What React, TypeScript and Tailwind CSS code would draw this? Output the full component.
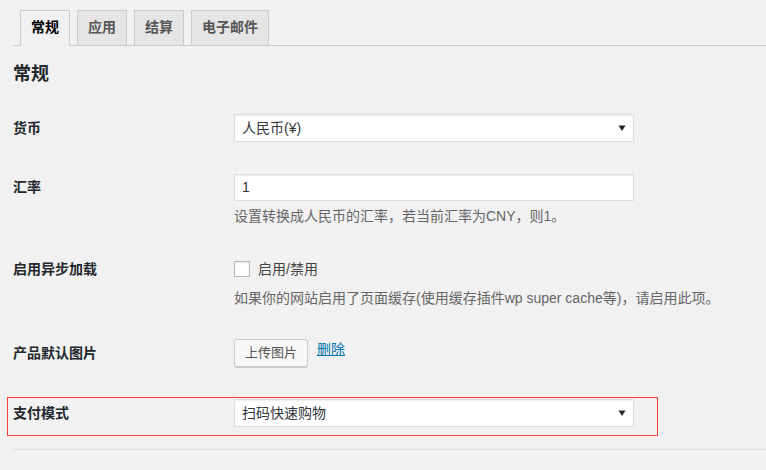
const font = { fontFamily: '"Liberation Sans", "Noto Sans CJK SC", sans-serif' };

function Caret() {
  return (
    <svg width="8" height="8" viewBox="0 0 8 8" className="shrink-0">
      <path d="M0.5 1.5 H7.5 L4 7 Z" fill="#23282d" />
    </svg>
  );
}

function Select({ value }: { value: string }) {
  return (
    <div className="w-[400px] h-[28px] bg-white border border-[#dddddd] shadow-[inset_0_1px_2px_rgba(0,0,0,0.07)] flex items-center justify-between pl-[7px] pr-[7px] text-[14px] text-[#32373c]">
      <span className="leading-[20px]">{value}</span>
      <Caret />
    </div>
  );
}

const tabs = ["常规", "应用", "结算", "电子邮件"];

export default function App() {
  return (
    <div className="w-[766px] h-[470px] bg-[#f1f1f1] overflow-hidden pl-[13px]" style={font}>
      {/* tabs */}
      <div className="flex items-end pt-[10px] border-b border-[#cccccc] h-[46px]">
        {tabs.map((t, i) => (
          <div
            key={t}
            className={`ml-[7px] px-[10px] h-[36px] -mb-px border border-[#cccccc] text-[14px] font-bold leading-[33px] ${
              i === 0 ? "bg-[#f1f1f1] border-b-[#f1f1f1] text-black" : "bg-[#e5e5e5] text-[#555555]"
            }`}
          >
            {t}
          </div>
        ))}
      </div>

      <h2 className="mt-[16px] text-[18px] font-bold leading-[24px] text-[#23282d]">常规</h2>

      {/* 货币 */}
      <div className="flex mt-[28px]">
        <div className="w-[221px] text-[14px] font-bold text-[#23282d] leading-[28px]">货币</div>
        <Select value="人民币(¥)" />
      </div>

      {/* 汇率 */}
      <div className="flex mt-[32px]">
        <div className="w-[221px] text-[14px] font-bold text-[#23282d] leading-[27px]">汇率</div>
        <div className="flex flex-col">
          <div className="w-[400px] h-[27px] bg-white border border-[#dddddd] shadow-[inset_0_1px_2px_rgba(0,0,0,0.07)] flex items-center pl-[7px] text-[14px] text-[#32373c]">
            1
          </div>
          <p className="mt-[5px] text-[14px] leading-[20px] text-[#666666]">
            设置转换成人民币的汇率，若当前汇率为CNY，则1。
          </p>
        </div>
      </div>

      {/* 启用异步加载 */}
      <div className="flex mt-[29px]">
        <div className="w-[221px] text-[14px] font-bold text-[#23282d] leading-[28px]">启用异步加载</div>
        <div className="flex flex-col">
          <div className="flex items-center h-[28px]">
            <span className="w-[16px] h-[16px] bg-white border border-[#b4b9be] shadow-[inset_0_1px_2px_rgba(0,0,0,0.1)]" />
            <span className="ml-[8px] text-[14px] text-[#444444]">启用/禁用</span>
          </div>
          <p className="mt-[5px] text-[14px] leading-[20px] text-[#666666]">
            如果你的网站启用了页面缓存(使用缓存插件wp super cache等)，请启用此项。
          </p>
        </div>
      </div>

      {/* 产品默认图片 */}
      <div className="flex mt-[31px]">
        <div className="w-[221px] text-[14px] font-bold text-[#23282d] leading-[28px]">产品默认图片</div>
        <div className="flex items-start">
          <button className="h-[28px] px-[10px] bg-[#f7f7f7] border border-[#cccccc] rounded-[3px] shadow-[0_1px_0_#cccccc] text-[13px] text-[#555555] leading-[26px]">
            上传图片
          </button>
          <a className="ml-[9px] mt-[1px] text-[14px] leading-[18px] text-[#0073aa] underline">删除</a>
        </div>
      </div>

      {/* 支付模式 (highlighted) */}
      <div className="mt-[31px] -ml-[5px] w-[649px] flex pl-[5px] pt-[1px] pb-[8px] shadow-[0_0_0_1px_#ff3b3b]">
        <div className="w-[221px] text-[14px] font-bold text-[#23282d] leading-[28px]">支付模式</div>
        <Select value="扫码快速购物" />
      </div>

      <div className="mt-[14px] -ml-px border-t border-[#dddddd]" />
    </div>
  );
}
